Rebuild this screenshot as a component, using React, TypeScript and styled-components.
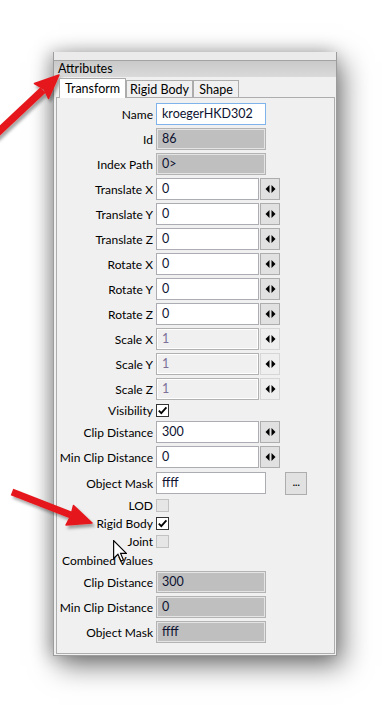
import styled, { createGlobalStyle } from "styled-components";

const GlobalStyle = createGlobalStyle`
  html, body {
    margin: 0;
    padding: 0;
    background: #fff;
  }
  body {
    font-family: Lato, "Segoe UI", "Noto Sans", sans-serif;
    font-size: 12px;
    color: #000;
  }
`;

const Page = styled.div`
  position: relative;
  width: 389px;
  height: 708px;
  padding: 52px 0 0 53px;
  box-sizing: border-box;
  overflow: hidden;
  background: #fff;
`;

const Window = styled.div`
  width: 284px;
  height: 604px;
  box-sizing: border-box;
  display: flex;
  flex-direction: column;
  background: #f0f0f0;
  border: 1px solid #9c9c9c;
  border-top: none;
  box-shadow: 6px 10px 26px rgba(0, 0, 0, 0.5), -4px 0 16px rgba(0, 0, 0, 0.25);
`;

const TopBand = styled.div`
  height: 8px;
  background: #ebebeb;
`;

const TitleBar = styled.div`
  height: 16px;
  line-height: 16px;
  padding-left: 4px;
  border-top: 1px solid #a3a3a3;
  background: linear-gradient(#c9c9c9, #dadada);
  font-size: 12.5px;
`;

const Body = styled.div`
  flex: 1;
  display: flex;
  flex-direction: column;
  padding: 0 1px 1px 2px;
  min-height: 0;
`;

const TabStrip = styled.div`
  display: flex;
  align-items: flex-end;
  height: 20px;
  padding-left: 3px;
  position: relative;
  z-index: 1;
`;

const Tab = styled.div<{ $active?: boolean; $w: number }>`
  box-sizing: border-box;
  width: ${(p) => p.$w}px;
  height: ${(p) => (p.$active ? 20 : 17)}px;
  margin-bottom: ${(p) => (p.$active ? -1 : 0)}px;
  border: 1px solid #acacac;
  border-bottom: none;
  background: ${(p) => (p.$active ? "#fff" : "#f0f0f0")};
  display: flex;
  align-items: center;
  justify-content: center;
  white-space: nowrap;
  font-size: 12.5px;
`;

const Pane = styled.div`
  flex: 1;
  border: 1px solid #adadad;
  background: #f0f0f0;
  padding: 5px 0 0 4px;
  display: grid;
  grid-template-columns: 92px 1fr;
  column-gap: 3px;
  row-gap: 3px;
  align-content: start;
`;

const Label = styled.div<{ $h?: number }>`
  height: ${(p) => p.$h ?? 22}px;
  display: flex;
  align-items: center;
  justify-content: flex-end;
  white-space: nowrap;
`;

const SectionLabel = styled.div`
  grid-column: 1 / -1;
  height: 16px;
  display: flex;
  align-items: center;
  padding-left: 1px;
  white-space: nowrap;
`;

const Field = styled.div<{ $h?: number }>`
  height: ${(p) => p.$h ?? 22}px;
  display: flex;
  align-items: center;
`;

type BoxKind = "normal" | "focus" | "readonly" | "disabled";

const boxStyles: Record<BoxKind, string> = {
  normal: "background: #fff; border-color: #abadb3;",
  focus: "background: #fff; border-color: #7eb4ea;",
  readonly: "background: #bfbfbf; border-color: #b3b3b3; box-shadow: inset 0 0 0 1px #e4e4e4;",
  disabled: "background: #f0f0f0; border-color: #b1b1b1; box-shadow: inset 0 0 0 1px #fff; color: #7c7099;",
};

const TextBox = styled.div<{ $kind?: BoxKind; $w: number }>`
  box-sizing: border-box;
  width: ${(p) => p.$w}px;
  height: 22px;
  line-height: 20px;
  padding-left: 5px;
  border: 1px solid;
  color: #0d1230;
  font-size: 12.5px;
  white-space: nowrap;
  overflow: hidden;
  ${(p) => boxStyles[p.$kind ?? "normal"]}
`;

const SpinButton = styled.div<{ $disabled?: boolean }>`
  box-sizing: border-box;
  width: 20px;
  height: 22px;
  margin-left: 1px;
  border: 1px solid ${(p) => (p.$disabled ? "#d6d6d6" : "#adadad")};
  background: ${(p) => (p.$disabled ? "#efefef" : "#e1e1e1")};
  display: flex;
  align-items: center;
  justify-content: center;
`;

const DotsButton = styled.div`
  box-sizing: border-box;
  width: 22px;
  height: 23px;
  margin-left: 19px;
  border: 1px solid #adadad;
  background: #e1e1e1;
  display: flex;
  align-items: center;
  justify-content: center;
  padding-bottom: 3px;
  font-size: 12px;
  letter-spacing: -0.5px;
`;

const CheckBox = styled.div<{ $disabled?: boolean }>`
  box-sizing: border-box;
  width: 13px;
  height: 13px;
  border: 1px solid ${(p) => (p.$disabled ? "#c2c2c2" : "#333")};
  background: ${(p) => (p.$disabled ? "#e6e6e6" : "#fff")};
  display: flex;
  align-items: center;
  justify-content: center;
`;

const Overlay = styled.svg`
  position: absolute;
  left: 0;
  top: 0;
  width: 389px;
  height: 708px;
  pointer-events: none;
`;

const Cursor = styled.svg`
  position: absolute;
  left: 113px;
  top: 540px;
  width: 14px;
  height: 22px;
  pointer-events: none;
`;

function SpinGlyph() {
  return (
    <svg width="11" height="8" viewBox="0 0 11 8">
      <path d="M4.5 0 L0.5 4 L4.5 8 Z M6.5 0 L10.5 4 L6.5 8 Z" fill="#000" />
    </svg>
  );
}

function Check() {
  return (
    <svg width="11" height="11" viewBox="0 0 11 11">
      <path d="M1.8 5.6 L4.3 8.2 L9.4 2.4" fill="none" stroke="#000" strokeWidth="1.8" />
    </svg>
  );
}

type Row =
  | { kind: "text"; label: string; value: string; box?: BoxKind }
  | { kind: "spin"; label: string; value: string; disabled?: boolean }
  | { kind: "check"; label: string; checked?: boolean; disabled?: boolean }
  | { kind: "mask"; label: string; value: string }
  | { kind: "section"; label: string };

const rows: Row[] = [
  { kind: "text", label: "Name", value: "kroegerHKD302", box: "focus" },
  { kind: "text", label: "Id", value: "86", box: "readonly" },
  { kind: "text", label: "Index Path", value: "0>", box: "readonly" },
  { kind: "spin", label: "Translate X", value: "0" },
  { kind: "spin", label: "Translate Y", value: "0" },
  { kind: "spin", label: "Translate Z", value: "0" },
  { kind: "spin", label: "Rotate X", value: "0" },
  { kind: "spin", label: "Rotate Y", value: "0" },
  { kind: "spin", label: "Rotate Z", value: "0" },
  { kind: "spin", label: "Scale X", value: "1", disabled: true },
  { kind: "spin", label: "Scale Y", value: "1", disabled: true },
  { kind: "spin", label: "Scale Z", value: "1", disabled: true },
  { kind: "check", label: "Visibility", checked: true },
  { kind: "spin", label: "Clip Distance", value: "300" },
  { kind: "spin", label: "Min Clip Distance", value: "0" },
  { kind: "mask", label: "Object Mask", value: "ffff" },
  { kind: "check", label: "LOD", disabled: true },
  { kind: "check", label: "Rigid Body", checked: true },
  { kind: "check", label: "Joint", disabled: true },
  { kind: "section", label: "Combined Values" },
  { kind: "text", label: "Clip Distance", value: "300", box: "readonly" },
  { kind: "text", label: "Min Clip Distance", value: "0", box: "readonly" },
  { kind: "text", label: "Object Mask", value: "ffff", box: "readonly" },
];

function renderRow(row: Row, i: number) {
  if (row.kind === "section") {
    return <SectionLabel key={i}>{row.label}</SectionLabel>;
  }
  if (row.kind === "check") {
    return [
      <Label key={`l${i}`} $h={15}>{row.label}</Label>,
      <Field key={`f${i}`} $h={15}>
        <CheckBox $disabled={row.disabled}>{row.checked && <Check />}</CheckBox>
      </Field>,
    ];
  }
  if (row.kind === "mask") {
    return [
      <Label key={`l${i}`} $h={24}>{row.label}</Label>,
      <Field key={`f${i}`} $h={24}>
        <TextBox $w={110}>{row.value}</TextBox>
        <DotsButton>...</DotsButton>
      </Field>,
    ];
  }
  if (row.kind === "spin") {
    return [
      <Label key={`l${i}`}>{row.label}</Label>,
      <Field key={`f${i}`}>
        <TextBox $w={103} $kind={row.disabled ? "disabled" : "normal"}>
          {row.value}
        </TextBox>
        <SpinButton $disabled={row.disabled}>
          <SpinGlyph />
        </SpinButton>
      </Field>,
    ];
  }
  return [
    <Label key={`l${i}`}>{row.label}</Label>,
    <Field key={`f${i}`}>
      <TextBox $w={110} $kind={row.box}>{row.value}</TextBox>
    </Field>,
  ];
}

export default function App() {
  return (
    <>
      <GlobalStyle />
      <Page>
        <Window>
          <TopBand />
          <TitleBar>Attributes</TitleBar>
          <Body>
            <TabStrip>
              <Tab $active $w={67}>Transform</Tab>
              <Tab $w={67}>Rigid Body</Tab>
              <Tab $w={46}>Shape</Tab>
            </TabStrip>
            <Pane>{rows.map(renderRow)}</Pane>
          </Body>
        </Window>

        {/* annotation arrows drawn over the screenshot */}
        <Overlay viewBox="0 0 389 708">
          <defs>
            <filter id="arrowShadow" x="-20%" y="-20%" width="140%" height="140%">
              <feDropShadow dx="2" dy="3" stdDeviation="1.6" floodColor="#000" floodOpacity="0.35" />
            </filter>
          </defs>
          <g filter="url(#arrowShadow)" fill="#e5191c" stroke="#e5191c">
            <line x1="-6" y1="136" x2="43" y2="90" strokeWidth="7.5" />
            <path d="M59 75 L34.5 83.5 L44 89 L48.5 98.5 Z" strokeWidth="1.5" strokeLinejoin="round" />
            <line x1="12" y1="492" x2="71" y2="515" strokeWidth="7" />
            <path d="M92 523 L66 525 L71 515.5 L73.5 505.5 Z" strokeWidth="1.5" strokeLinejoin="round" />
          </g>
        </Overlay>
        <Cursor viewBox="0 0 12 19">
          <path
            d="M0.5 0.5 L0.5 16 L4.2 12.4 L6.8 18.2 L9 17.2 L6.5 11.6 L11.5 11.6 Z"
            fill="#fff"
            stroke="#000"
            strokeWidth="1"
            strokeLinejoin="miter"
          />
        </Cursor>
      </Page>
    </>
  );
}
